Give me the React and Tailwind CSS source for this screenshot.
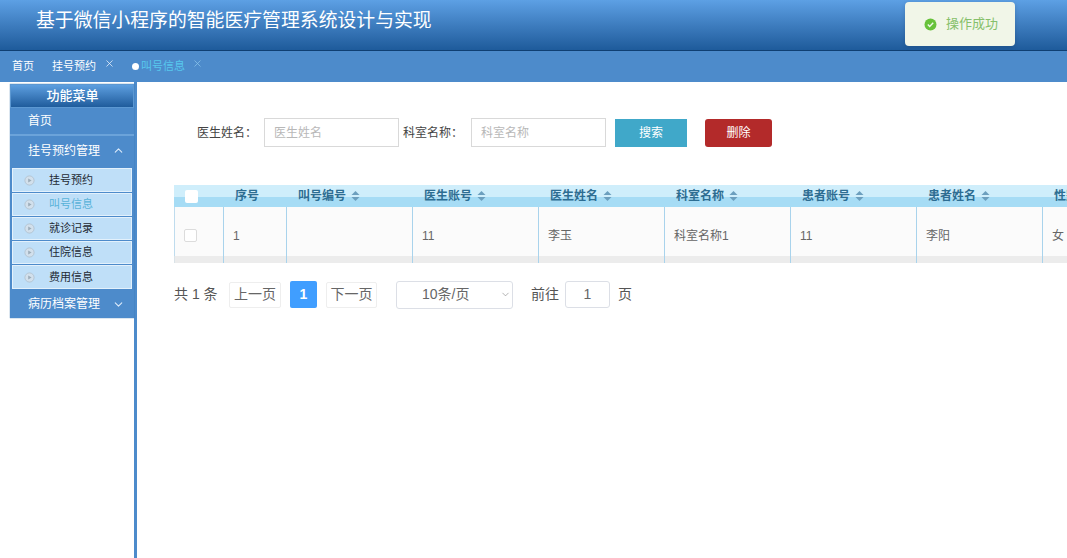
import { ChevronUp, ChevronDown, X } from 'lucide-react'

const FONT = "font-['Liberation_Sans','Noto_Sans_CJK_SC',sans-serif]"

const SUB_MENU = [
  { label: '挂号预约', height: 'h-[24px]' },
  { label: '叫号信息', height: 'h-[23px]', active: true },
  { label: '就诊记录', height: 'h-[23px]' },
  { label: '住院信息', height: 'h-[23px]' },
  { label: '费用信息', height: 'h-[24px]' },
]

const COLUMNS = [
  { label: '序号', width: 'w-[63px]', value: '1' },
  { label: '叫号编号', width: 'w-[126px]', value: '', sort: true },
  { label: '医生账号', width: 'w-[126px]', value: '11', sort: true },
  { label: '医生姓名', width: 'w-[126px]', value: '李玉', sort: true },
  { label: '科室名称', width: 'w-[126px]', value: '科室名称1', sort: true },
  { label: '患者账号', width: 'w-[126px]', value: '11', sort: true },
  { label: '患者姓名', width: 'w-[126px]', value: '李阳', sort: true },
  { label: '性别', width: 'w-[126px]', value: '女' },
]

function SortIcon() {
  return (
    <svg width="9" height="12" viewBox="0 0 9 12" className="ml-[5px] shrink-0">
      <path d="M4.5 1 L8.5 5 H0.5 Z" fill="#6c9fbe" />
      <path d="M4.5 11 L8.5 7 H0.5 Z" fill="#6c9fbe" />
    </svg>
  )
}

function PlayDot() {
  return (
    <svg width="11" height="11" viewBox="0 0 11 11" className="shrink-0">
      <circle cx="5.5" cy="5.5" r="4.6" fill="#d2e0ec" stroke="#b0bfcc" strokeWidth="0.8" />
      <path d="M4.2 3.4 L7.6 5.5 L4.2 7.6 Z" fill="#9cacb9" />
    </svg>
  )
}

function Sidebar() {
  return (
    <aside className="w-[137px] shrink-0 border-r-[3px] border-[#4d8bcb] pl-[10px] pt-[2px]">
      <div className="w-[124px] bg-[#4d8bcb] text-white shadow-[0_0_1px_#2e6ca8]">
        <div className="flex h-[24px] items-center justify-center border border-[#5c98d2] bg-gradient-to-b from-[#5d9fe0] to-[#1f5c9c] pl-px text-[13px] font-medium">
          功能菜单
        </div>
        <div className="flex h-[28px] items-center border-b-2 border-[#6ba3da] pl-[18px] text-[12px]">首页</div>
        <div className="flex h-[29px] items-center justify-between pl-[18px] pr-[9px] text-[12px]">
          挂号预约管理
          <ChevronUp size={13} strokeWidth={2} className="text-[#dcebfa]" />
        </div>
        <div className="flex flex-col gap-px px-[2px] pb-px pt-[3px]">
          {SUB_MENU.map(item => (
            <div
              key={item.label}
              className={`flex ${item.height} items-center border border-[#e3f1fc] bg-[#bfdff8] pl-[11px] text-[11px] ${
                item.active ? 'text-[#58b2d8]' : 'text-[#1e2a34]'
              }`}
            >
              <PlayDot />
              <span className="ml-[14px]">{item.label}</span>
            </div>
          ))}
        </div>
        <div className="flex h-[28px] items-center justify-between pl-[18px] pr-[9px] text-[12px]">
          病历档案管理
          <ChevronDown size={13} strokeWidth={2} className="text-[#dcebfa]" />
        </div>
      </div>
    </aside>
  )
}

function SearchBar() {
  return (
    <div className="flex h-[29px] items-center text-[12px] text-[#444]">
      <span className="ml-[60px] w-[67px]">医生姓名：</span>
      <div className="flex h-[29px] w-[135px] items-center border border-[#d9d9d9] pl-[9px] text-[#b8b8b8]">医生姓名</div>
      <span className="ml-[4px] w-[68px]">科室名称：</span>
      <div className="flex h-[29px] w-[135px] items-center border border-[#d9d9d9] pl-[9px] text-[#b8b8b8]">科室名称</div>
      <button className="ml-[9px] h-[28px] w-[72px] bg-[#40a8c9] text-[12px] text-white">搜索</button>
      <button className="ml-[18px] h-[28px] w-[67px] rounded-[3px] bg-[#b32a2a] text-[12px] text-white">删除</button>
    </div>
  )
}

function DataTable() {
  return (
    <div className="mt-[38px] w-[1100px] text-[12px]">
      <div className="flex h-[22px] bg-[linear-gradient(#cfeefb_0,#cfeefb_55%,#a6dcf5_55%,#a6dcf5_100%)] font-semibold text-[#2d6d92]">
        <div className="flex w-[49px] items-center pl-[11px]">
          <span className="h-[13px] w-[13px] rounded-[2px] bg-white" />
        </div>
        {COLUMNS.map(col => (
          <div key={col.label} className={`flex ${col.width} shrink-0 items-center pl-[12px]`}>
            {col.label}
            {col.sort && <SortIcon />}
          </div>
        ))}
      </div>
      <div className="flex h-[56px] border-l border-[#bfdcee] bg-[#fbfbfb] text-[#666]">
        <div className="w-[48px] pl-[9px] pt-[22px]">
          <div className="h-[13px] w-[13px] rounded-[2px] border border-[#dcdcdc] bg-white" />
        </div>
        {COLUMNS.map(col => (
          <div
            key={col.label}
            className={`${col.width} shrink-0 border-l border-[#a9d3ec] pl-[9px] pt-[20px]`}
          >
            {col.value}
          </div>
        ))}
      </div>
      <div className="-mt-[7px] h-[7px] bg-[#e6e6e6]/70" />
    </div>
  )
}

function Pagination() {
  return (
    <div className="mt-[18px] flex h-[27px] items-center text-[14px] text-[#555]">
      <span className="w-[55px]">共 1 条</span>
      <div className="flex h-[26px] w-[52px] items-center justify-center rounded-[2px] border border-[#eeeeee] text-[#666]">上一页</div>
      <div className="ml-[9px] flex h-[27px] w-[27px] items-center justify-center rounded-[2px] bg-[#409eff] font-bold text-white">1</div>
      <div className="ml-[9px] flex h-[26px] w-[51px] items-center justify-center rounded-[2px] border border-[#eeeeee] text-[#666]">下一页</div>
      <div className="ml-[19px] flex h-[28px] w-[117px] items-center justify-between rounded-[3px] border border-[#dcdfe6] pl-[25px] pr-px text-[#666]">
        10条/页
        <ChevronDown size={11} strokeWidth={1.4} className="text-[#888]" />
      </div>
      <span className="ml-[18px]">前往</span>
      <div className="ml-[6px] flex h-[27px] w-[45px] items-center justify-center rounded-[3px] border border-[#dcdfe6] text-[#666]">1</div>
      <span className="ml-[8px]">页</span>
    </div>
  )
}

export default function App() {
  return (
    <div className={`relative flex h-screen w-full flex-col overflow-hidden bg-white ${FONT}`}>
      {/* Header */}
      <header className="h-[51px] shrink-0 border-b border-[#0f3f72] bg-gradient-to-b from-[#5da0e4] to-[#1e5b9b] pl-[36px] pt-[9px] text-[18.85px] leading-[24px] text-white">
        基于微信小程序的智能医疗管理系统设计与实现
      </header>

      {/* Tabs */}
      <nav className="flex h-[31px] shrink-0 items-center bg-[#4d8bcb] pl-[12px] text-[11px] text-white">
        <span>首页</span>
        <span className="ml-[18px]">挂号预约</span>
        <X size={11} strokeWidth={1.6} className="-mt-[6px] ml-[8px] text-[#f0f6fc]" />
        <span className="ml-[17px] mr-[2px] h-[7px] w-[7px] rounded-full bg-white" />
        <span className="text-[#57c8ee]">叫号信息</span>
        <X size={11} strokeWidth={1.6} className="-mt-[6px] ml-[7px] text-[#8cc6ea]" />
      </nav>

      <div className="flex min-h-0 flex-1">
        <Sidebar />
        <main className="min-w-0 flex-1 overflow-hidden pl-[37px] pt-[36px]">
          <div className="-ml-[37px] w-[930px]">
            <SearchBar />
          </div>
          <DataTable />
          <Pagination />
        </main>
      </div>

      {/* Toast */}
      <div className="absolute left-[905px] top-[2px] flex h-[44px] w-[110px] items-center rounded-[4px] bg-[#f1f6e8] pl-[19px] text-[13px] shadow-[0_1px_4px_rgba(0,0,0,0.15)]">
        <svg width="13" height="13" viewBox="0 0 13 13" className="shrink-0">
          <circle cx="6.5" cy="6.5" r="6" fill="#67c23a" />
          <path d="M3.8 6.6 L5.7 8.5 L9.2 4.8" fill="none" stroke="#f0f9eb" strokeWidth="1.4" />
        </svg>
        <span className="ml-[9px] text-[#86c06a]">操作成功</span>
      </div>
    </div>
  )
}
